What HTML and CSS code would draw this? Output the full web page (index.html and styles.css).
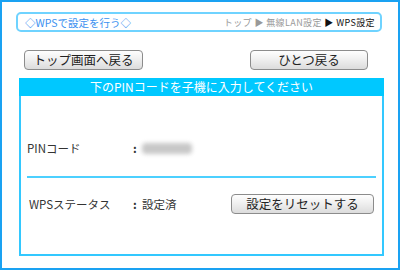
FILE: index.html
```html
<!DOCTYPE html>
<html lang="ja">
<head>
    <meta charset="UTF-8">
    <title>WPS設定</title>
    <link rel="stylesheet" href="styles.css">
</head>
<body>
    <div class="frame">
        <div class="title-box">
            <span class="page-title">◇WPSで設定を行う◇</span>
            <span class="crumbs">トップ ▶ 無線LAN設定 <b>▶ WPS設定</b></span>
        </div>

        <div class="nav-row">
            <button class="btn btn-top">トップ画面へ戻る</button>
            <button class="btn btn-back">ひとつ戻る</button>
        </div>

        <div class="panel">
            <div class="panel-head">下のPINコードを子機に入力してください</div>
            <div class="panel-body">
                <div class="row row-pin">
                    <span class="label">PINコード</span>
                    <span class="colon">:</span>
                    <span class="pin-blur"></span>
                </div>
                <div class="sep"></div>
                <div class="row row-status">
                    <span class="label label-wps">WPSステータス</span>
                    <span class="colon">:</span>
                    <span class="value">設定済</span>
                    <button class="btn btn-reset">設定をリセットする</button>
                </div>
            </div>
        </div>
    </div>
</body>
</html>
```

FILE: styles.css
```css
/* Global */
body {
    margin: 0;
    font-family: "Noto Sans CJK JP", "Noto Sans", sans-serif;
    background-color: #ffffff;
    color: #333;
}
.frame {
    width: 400px;
    height: 270px;
    box-sizing: border-box;
    border: 2px solid #1aa2f2;
    padding: 10px 16px 0 14px;
}
/* Title box */
.title-box {
    height: 20px;
    box-sizing: border-box;
    border: 2px solid #6fd3ff;
    border-radius: 5px;
    display: flex;
    justify-content: space-between;
    align-items: center;
    padding: 0 5px 0 7px;
}
.page-title {
    font-size: 10.5px;
    color: #3a90f0;
}
.crumbs {
    font-size: 9px;
    letter-spacing: 0.4px;
    color: #999;
}
.crumbs b {
    font-weight: normal;
    color: #111;
}
/* Buttons */
.nav-row {
    display: flex;
    justify-content: space-between;
    margin: 18px 14px 0 8px;
}
.btn {
    height: 20px;
    padding: 0;
    font-family: "Noto Sans CJK JP", "Noto Sans", sans-serif;
    font-size: 12.5px;
    line-height: 18px;
    color: #222;
    border: 1px solid #8c8c8c;
    border-radius: 4px;
    background: linear-gradient(#fefefe, #f0f0f0 45%, #dcdcdc);
}
.btn-top {
    width: 119px;
}
.btn-back {
    width: 118px;
}
/* Panel */
.panel {
    margin: 8px 0 0 3px;
    width: 365px;
    height: 178px;
    box-sizing: border-box;
    border: 2px solid #33c8ff;
    border-top: none;
}
.panel-head {
    margin: 0 -2px;
    height: 18px;
    background-color: #00c8ff;
    color: #fff;
    font-size: 12px;
    line-height: 18px;
    text-align: center;
}
.panel-body {
    padding: 0 6px;
}
.row {
    display: flex;
    align-items: center;
    font-size: 11.5px;
}
.row-pin {
    height: 56px;
    padding-top: 24px;
}
.row-status {
    height: 52px;
}
.label {
    width: 104px;
}
.label-wps {
    padding-left: 2px;
    width: 102px;
}
.colon {
    width: 9px;
    padding-left: 2px;
    font-weight: bold;
}
.value {
    flex: 1;
}
.pin-blur {
    width: 50px;
    height: 11px;
    background-color: #c8c8c8;
    border-radius: 4px;
    filter: blur(2px);
}
.sep {
    height: 2px;
    background-color: #4cd0ff;
}
.btn-reset {
    width: 143px;
    margin-right: 2px;
}
```
